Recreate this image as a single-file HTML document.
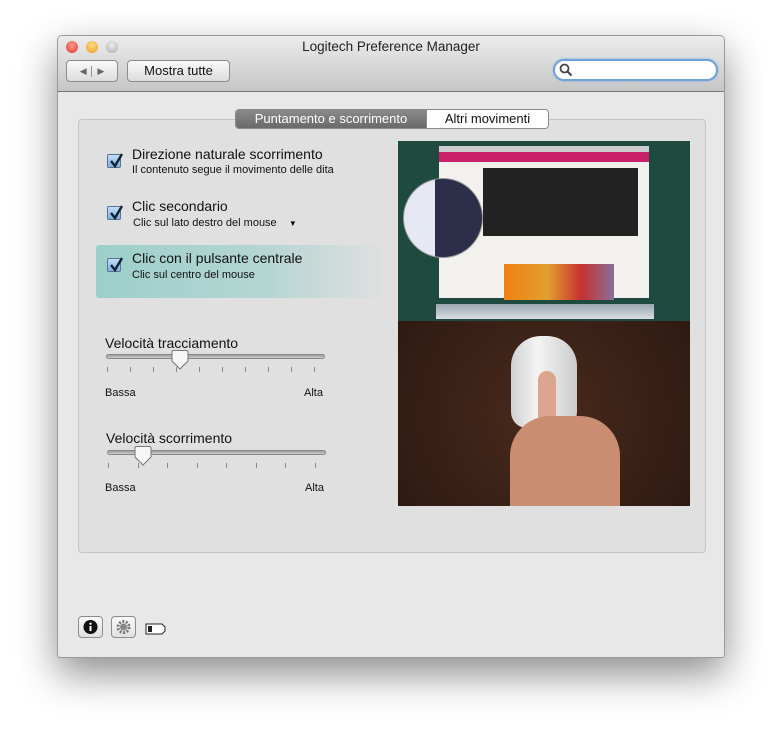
<!DOCTYPE html>
<html><head><meta charset="utf-8"><style>
*{margin:0;padding:0;box-sizing:border-box}
body{width:782px;height:738px;background:#fff;position:relative;overflow:hidden;font-family:"Liberation Sans",sans-serif;color:#111}
.win{position:absolute;left:57px;top:35px;width:668px;height:623px;background:#e8e8e8;border:1px solid #9a9a9a;border-radius:5px 5px 3px 3px;box-shadow:0 16px 40px rgba(0,0,0,.45);overflow:hidden}
.tb{position:absolute;left:0;top:0;width:100%;height:56px;background:linear-gradient(#ececec,#c6c6c6);border-bottom:1px solid #777}
.dot{position:absolute;top:5px;width:12px;height:12px;border-radius:50%}
.title{position:absolute;top:3px;width:100%;text-align:center;font-size:13.5px;color:#222}
.btn{position:absolute;top:24px;height:22px;border:1px solid #8c8c8c;border-radius:4px;background:linear-gradient(#fafafa,#dcdcdc);font-size:13px;text-align:center;line-height:20px}
.search{position:absolute;left:495px;top:23px;width:165px;height:22px;border-radius:11px;border:2px solid #6fa0d8;background:#fff;box-shadow:0 0 2px #7eb0ea}
.box{position:absolute;left:20px;top:83px;width:628px;height:434px;border:1px solid #c4c4c4;border-radius:4px;background:#e0e0e0}
.tabs{position:absolute;left:177px;top:73px;height:20px;display:flex;font-size:13px;border:1px solid #8a8a8a;border-radius:4px;overflow:hidden}
.tabs div{line-height:18px;text-align:center}
.cb{position:absolute;width:14px;height:14px;border:1px solid #5a7390;border-radius:2px;background:linear-gradient(#c4defa,#7eaee2)}
.cb svg{position:absolute;left:0;top:-3px}
.t1{position:absolute;font-size:14px}
.t2{position:absolute;font-size:11px}
.track{position:absolute;height:5px;border-radius:3px;background:linear-gradient(#9a9a9a,#d0d0d0);border:1px solid #888}
.tick{position:absolute;width:1px;height:5px;background:#888}
.knob{position:absolute}
.ib{position:absolute;top:580px;width:25px;height:22px;border:1px solid #8c8c8c;border-radius:4px;background:linear-gradient(#fafafa,#e0e0e0)}
</style></head><body>
<div class="win">
 <div class="tb">
  <div class="dot" style="left:8px;background:radial-gradient(circle at 50% 35%,#ff9b8e,#d83a2c)"></div>
  <div class="dot" style="left:28px;background:radial-gradient(circle at 50% 35%,#ffe08a,#e59a17)"></div>
  <div class="dot" style="left:48px;background:radial-gradient(circle at 50% 35%,#eee,#aaa)"></div>
  <div class="title">Logitech Preference Manager</div>
  <div class="btn" style="left:8px;width:52px;font-size:9px;color:#666">◀ │ ▶</div>
  <div class="btn" style="left:69px;width:103px">Mostra tutte</div>
  <div class="search"><svg width="14" height="14" style="position:absolute;left:4px;top:2px"><circle cx="5.5" cy="5.5" r="4" fill="none" stroke="#444" stroke-width="1.8"/><path d="M8.5 8.5l4 4" stroke="#444" stroke-width="2"/></svg></div>
 </div>
 <div class="box"></div>
 <div class="tabs"><div style="width:190px;background:linear-gradient(#8a8a8a,#6a6a6a);color:#fff">Puntamento e scorrimento</div><div style="width:122px;background:#fff;border-left:1px solid #8a8a8a">Altri movimenti</div></div>

 <div style="position:absolute;left:38px;top:209px;width:290px;height:53px;border-radius:3px;background:linear-gradient(90deg,#9ccfc9,#b6d6d3 60%,#e0e0e0)"></div>

 <div class="cb" style="left:49px;top:118px"><svg width="16" height="18"><path d="M3 9l4 5 7-12" fill="none" stroke="#123" stroke-width="2.4"/></svg></div>
 <div class="t1" style="left:74px;top:110px">Direzione naturale scorrimento</div>
 <div class="t2" style="left:74px;top:128px">Il contenuto segue il movimento delle dita</div>
 <div class="cb" style="left:49px;top:170px"><svg width="16" height="18"><path d="M3 9l4 5 7-12" fill="none" stroke="#123" stroke-width="2.4"/></svg></div>
 <div class="t1" style="left:74px;top:162px">Clic secondario</div>
 <div class="t2" style="left:75px;top:181px">Clic sul lato destro del mouse &nbsp;&nbsp;&nbsp;<span style="font-size:8px">▼</span></div>
 <div class="cb" style="left:49px;top:222px"><svg width="16" height="18"><path d="M3 9l4 5 7-12" fill="none" stroke="#123" stroke-width="2.4"/></svg></div>
 <div class="t1" style="left:74px;top:214px">Clic con il pulsante centrale</div>
 <div class="t2" style="left:74px;top:233px">Clic sul centro del mouse</div>

 <div class="t1" style="left:47px;top:299px">Velocità tracciamento</div>
 <div class="track" style="left:48px;top:318px;width:219px"></div>
 <svg class="knob" style="left:113px;top:314px" width="18" height="20"><path d="M1 2q0-1.5 1.5-1.5h13q1.5 0 1.5 1.5v9l-8 8-8-8z" fill="#f6f6f6" stroke="#777"/></svg>
 <div class="t2" style="left:47px;top:351px">Bassa</div>
 <div class="t2" style="left:246px;top:351px">Alta</div>

 <div class="t1" style="left:48px;top:394px">Velocità scorrimento</div>
 <div class="track" style="left:49px;top:414px;width:219px"></div>
 <svg class="knob" style="left:76px;top:410px" width="18" height="20"><path d="M1 2q0-1.5 1.5-1.5h13q1.5 0 1.5 1.5v9l-8 8-8-8z" fill="#f6f6f6" stroke="#777"/></svg>
 <div class="t2" style="left:47px;top:446px">Bassa</div>
 <div class="t2" style="left:247px;top:446px">Alta</div>

 <div style="position:absolute;left:340px;top:105px;width:292px;height:180px;background:#1f4a40;overflow:hidden">
  <div style="position:absolute;left:41px;top:5px;width:210px;height:152px;background:#f3f1ee">
   <div style="height:6px;background:#ccc"></div>
   <div style="height:10px;background:#c9206a"></div>
   <div style="position:absolute;left:44px;top:22px;width:155px;height:68px;background:#222"></div>
   <div style="position:absolute;left:65px;top:118px;width:110px;height:36px;background:linear-gradient(90deg,#f08010,#e0a030 40%,#c83030 70%,#8a6f9a)"></div>
  </div>
  <div style="position:absolute;left:5px;top:37px;width:80px;height:80px;border-radius:50%;background:linear-gradient(90deg,#e6e8f4 40%,#2d2f4a 40%);border:1px solid #999"></div>
  <div style="position:absolute;left:38px;top:163px;width:218px;height:15px;background:linear-gradient(#9aa6b0,#d8dde0)"></div>
 </div>
 <div style="position:absolute;left:340px;top:285px;width:292px;height:185px;background:radial-gradient(circle at 50% 50%,#4a2a1c,#2e1a12)">
  <div style="position:absolute;left:113px;top:15px;width:66px;height:92px;border-radius:30px 30px 16px 16px;background:linear-gradient(90deg,#d0d0d0,#f4f4f4 40%,#ccc)"></div>
  <div style="position:absolute;left:140px;top:50px;width:18px;height:80px;border-radius:9px;background:#dba68d"></div>
  <div style="position:absolute;left:112px;top:95px;width:110px;height:90px;border-radius:40px 40px 0 0;background:#c98d72"></div>
 </div>

 <div class="ib" style="left:20px"><svg width="23" height="20"><circle cx="11.5" cy="10" r="7" fill="#111"/><rect x="10.5" y="9" width="2" height="5" fill="#fff"/><circle cx="11.5" cy="6.7" r="1.2" fill="#fff"/></svg></div>
 <div class="ib" style="left:53px"><svg width="23" height="20"><circle cx="11.5" cy="10" r="5.5" fill="none" stroke="#777" stroke-width="3" stroke-dasharray="2 1.5"/><circle cx="11.5" cy="10" r="3.5" fill="#888"/></svg></div>
 <svg style="position:absolute;left:87px;top:587px" width="22" height="12"><path d="M1 1h16l3 3v4l-3 3H1z" fill="#fff" stroke="#222"/><rect x="3" y="3" width="4" height="6" fill="#222"/></svg>
</div>
<script>
function ticks(x0,x1,n,y){for(let i=0;i<n;i++){const d=document.createElement('div');d.className='tick';d.style.left=(x0+(x1-x0)*i/(n-1))+'px';d.style.top=y+'px';document.querySelector('.win').appendChild(d);}}
ticks(49,256,10,331);ticks(50,257,8,427);
</script>
</body></html>
